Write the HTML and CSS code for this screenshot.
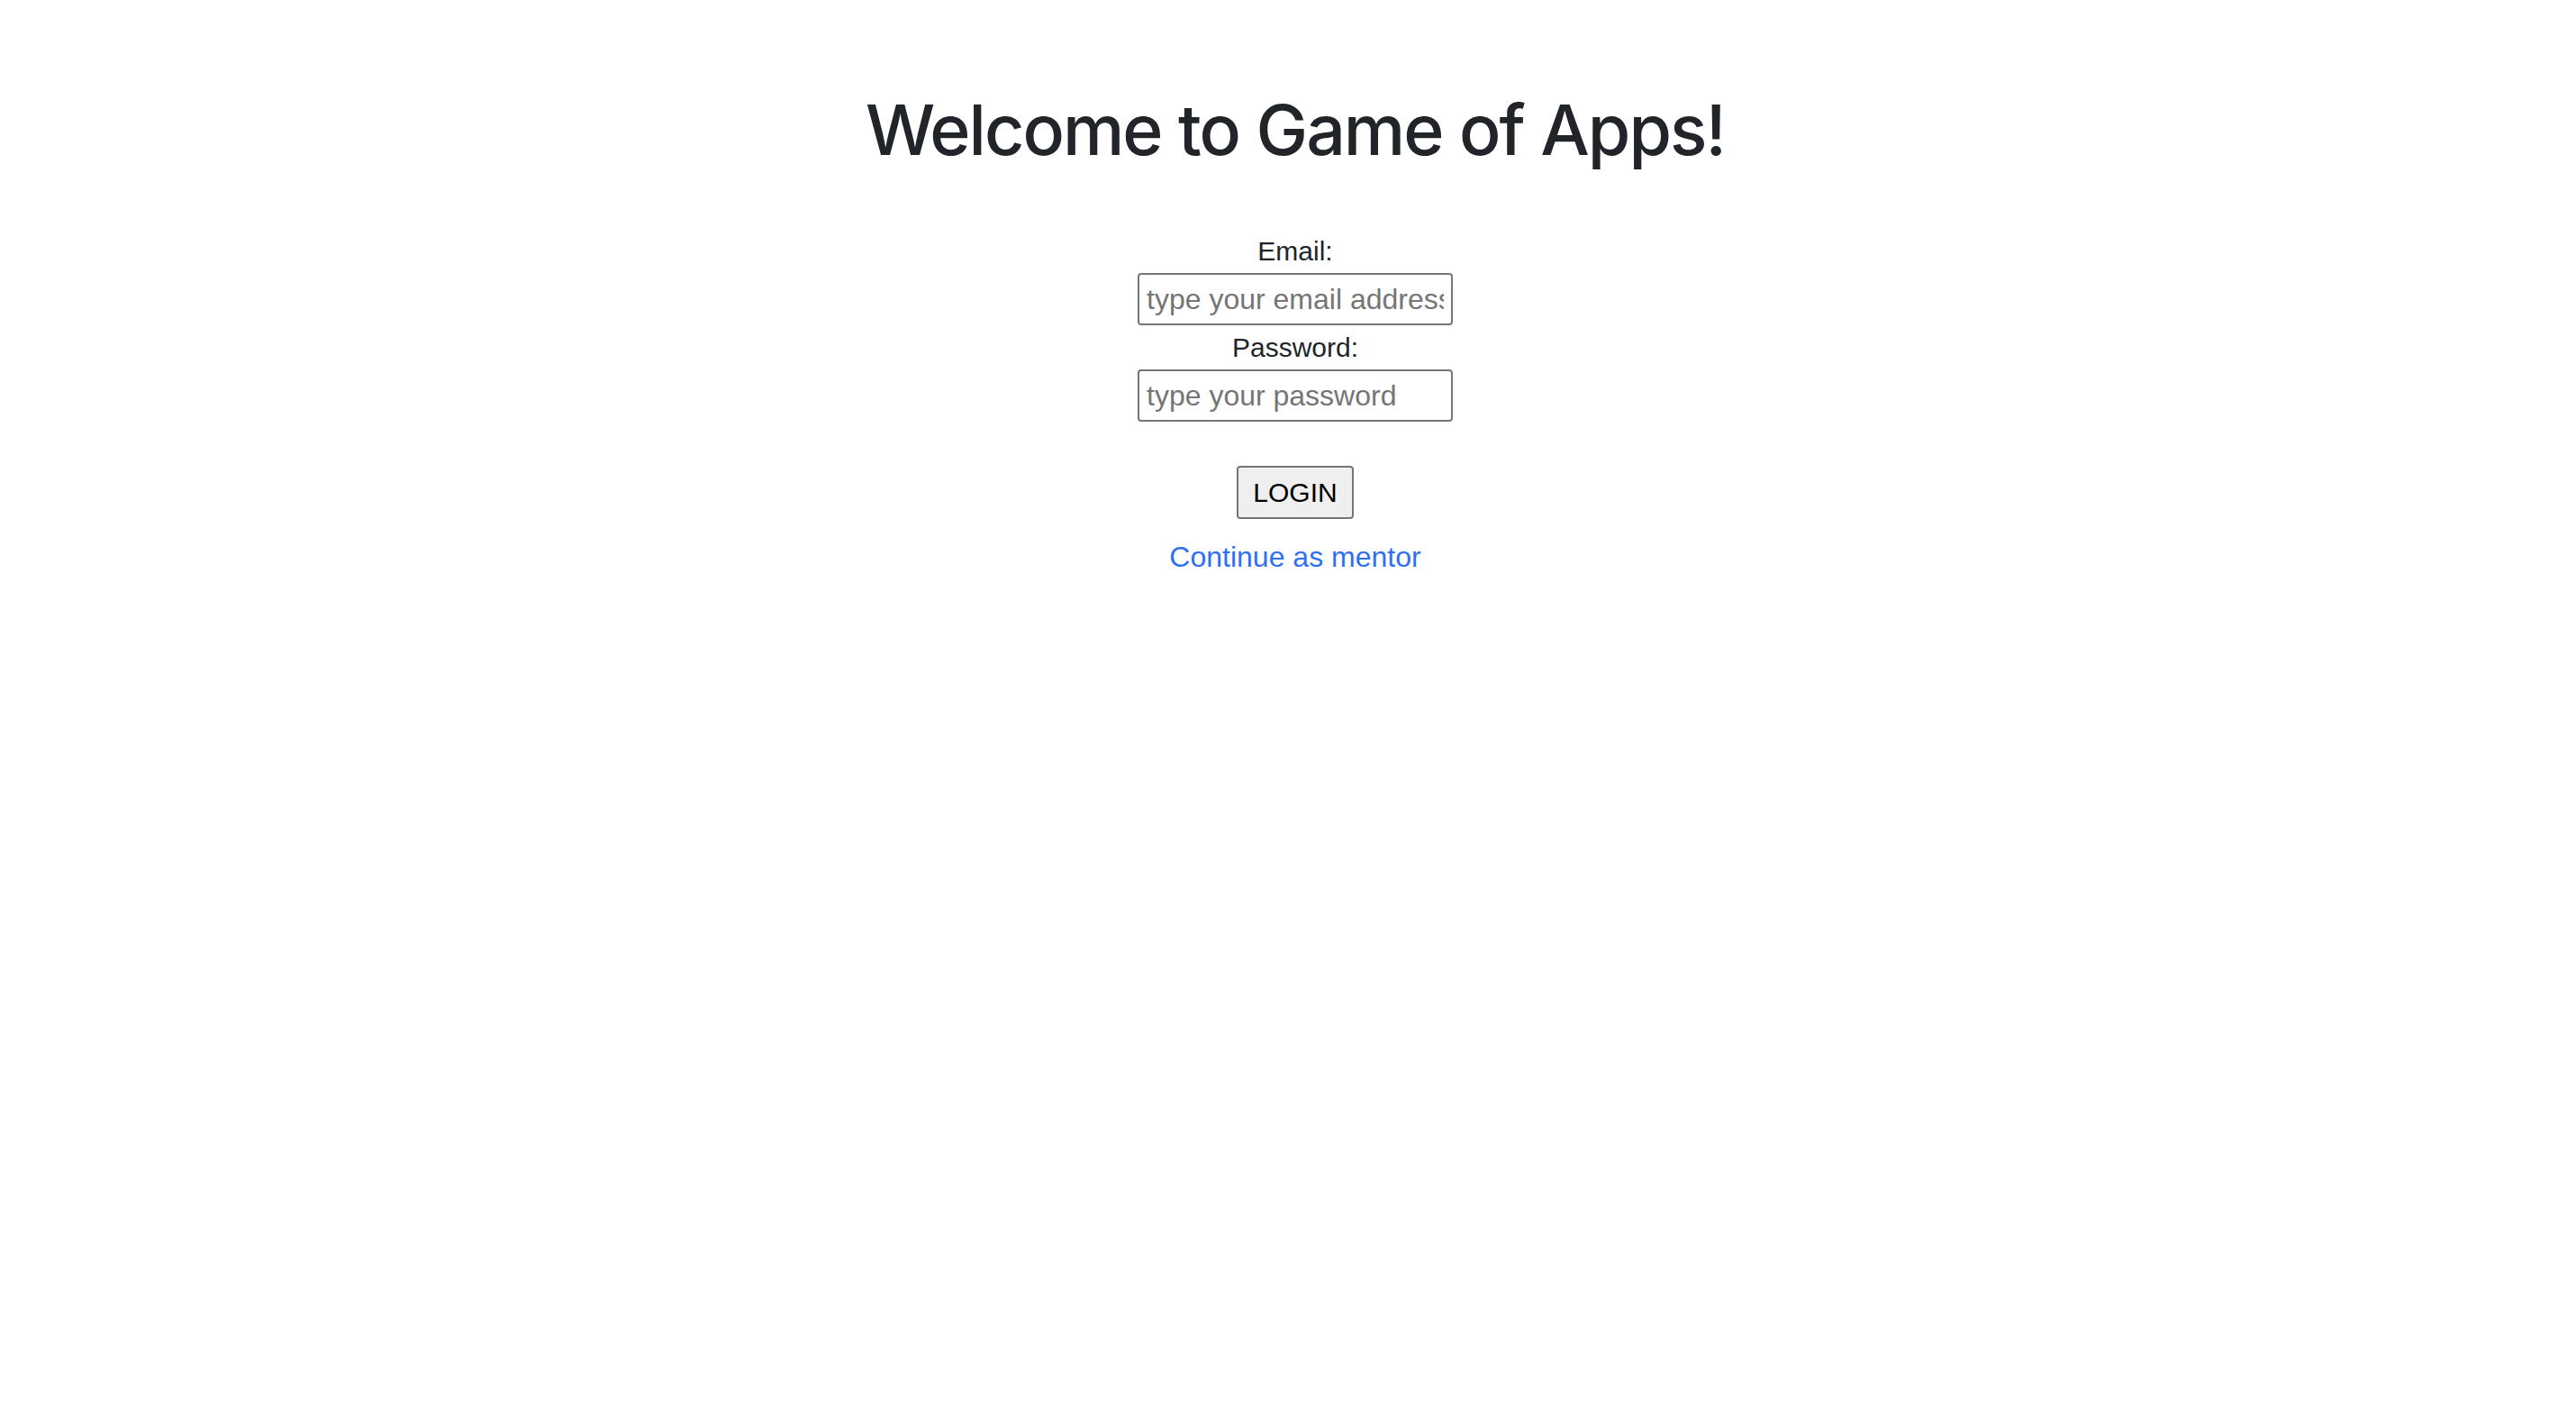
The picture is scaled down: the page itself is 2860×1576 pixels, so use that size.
FILE: index.html
```html
<!DOCTYPE html>
<html lang="en">
<head>
<meta charset="utf-8">
<title>Game of Apps</title>
<link rel="stylesheet" href="styles.css">
</head>
<body>
<main class="page">
  <h1 class="title">Welcome to Game of Apps!</h1>
  <form class="login-form">
    <label class="field-label" for="email">Email:</label>
    <input class="field-input" id="email" type="email" placeholder="type your email address">
    <label class="field-label" for="password">Password:</label>
    <input class="field-input field-input-last" id="password" type="password" placeholder="type your password">
    <button class="login-btn" type="button">LOGIN</button>
    <a class="mentor-link" href="#">Continue as mentor</a>
  </form>
</main>
</body>
</html>
```

FILE: styles.css
```css
html, body {
  margin: 0;
  padding: 0;
  background: #ffffff;
}

body {
  font-family: "Liberation Sans", Arial, sans-serif;
  color: #212529;
}

.page {
  display: flex;
  flex-direction: column;
  align-items: center;
  padding: 97px 0 0 16px;
}

.title {
  margin: 0 0 70px 0;
  font-family: Inter, "Liberation Sans", Arial, sans-serif;
  font-size: 77px;
  line-height: 94px;
  font-weight: 500;
  letter-spacing: -2px;
  color: #212529;
}

.login-form {
  display: flex;
  flex-direction: column;
  align-items: center;
}

.field-label {
  display: block;
  font-size: 30px;
  line-height: 36px;
  color: #212529;
  margin-bottom: 6px;
}

.field-input {
  box-sizing: border-box;
  width: 350px;
  height: 58px;
  border: 2px solid #767676;
  border-radius: 4px;
  padding: 0 8px;
  margin: 0 0 7px 0;
  font-family: "Liberation Sans", Arial, sans-serif;
  font-size: 32px;
  color: #000;
  background: #fff;
  outline: none;
}

.field-input::placeholder {
  color: #757575;
}

.field-input-last {
  margin-bottom: 49px;
}

.login-btn {
  box-sizing: border-box;
  height: 59px;
  padding: 0 16px;
  border: 2px solid #767676;
  border-radius: 4px;
  background: #efefef;
  color: #000;
  font-family: "Liberation Sans", Arial, sans-serif;
  font-size: 30px;
  margin: 0 0 23px 0;
}

.mentor-link {
  display: block;
  font-size: 32px;
  line-height: 38px;
  color: #2f6ff6;
  text-decoration: none;
}
```
